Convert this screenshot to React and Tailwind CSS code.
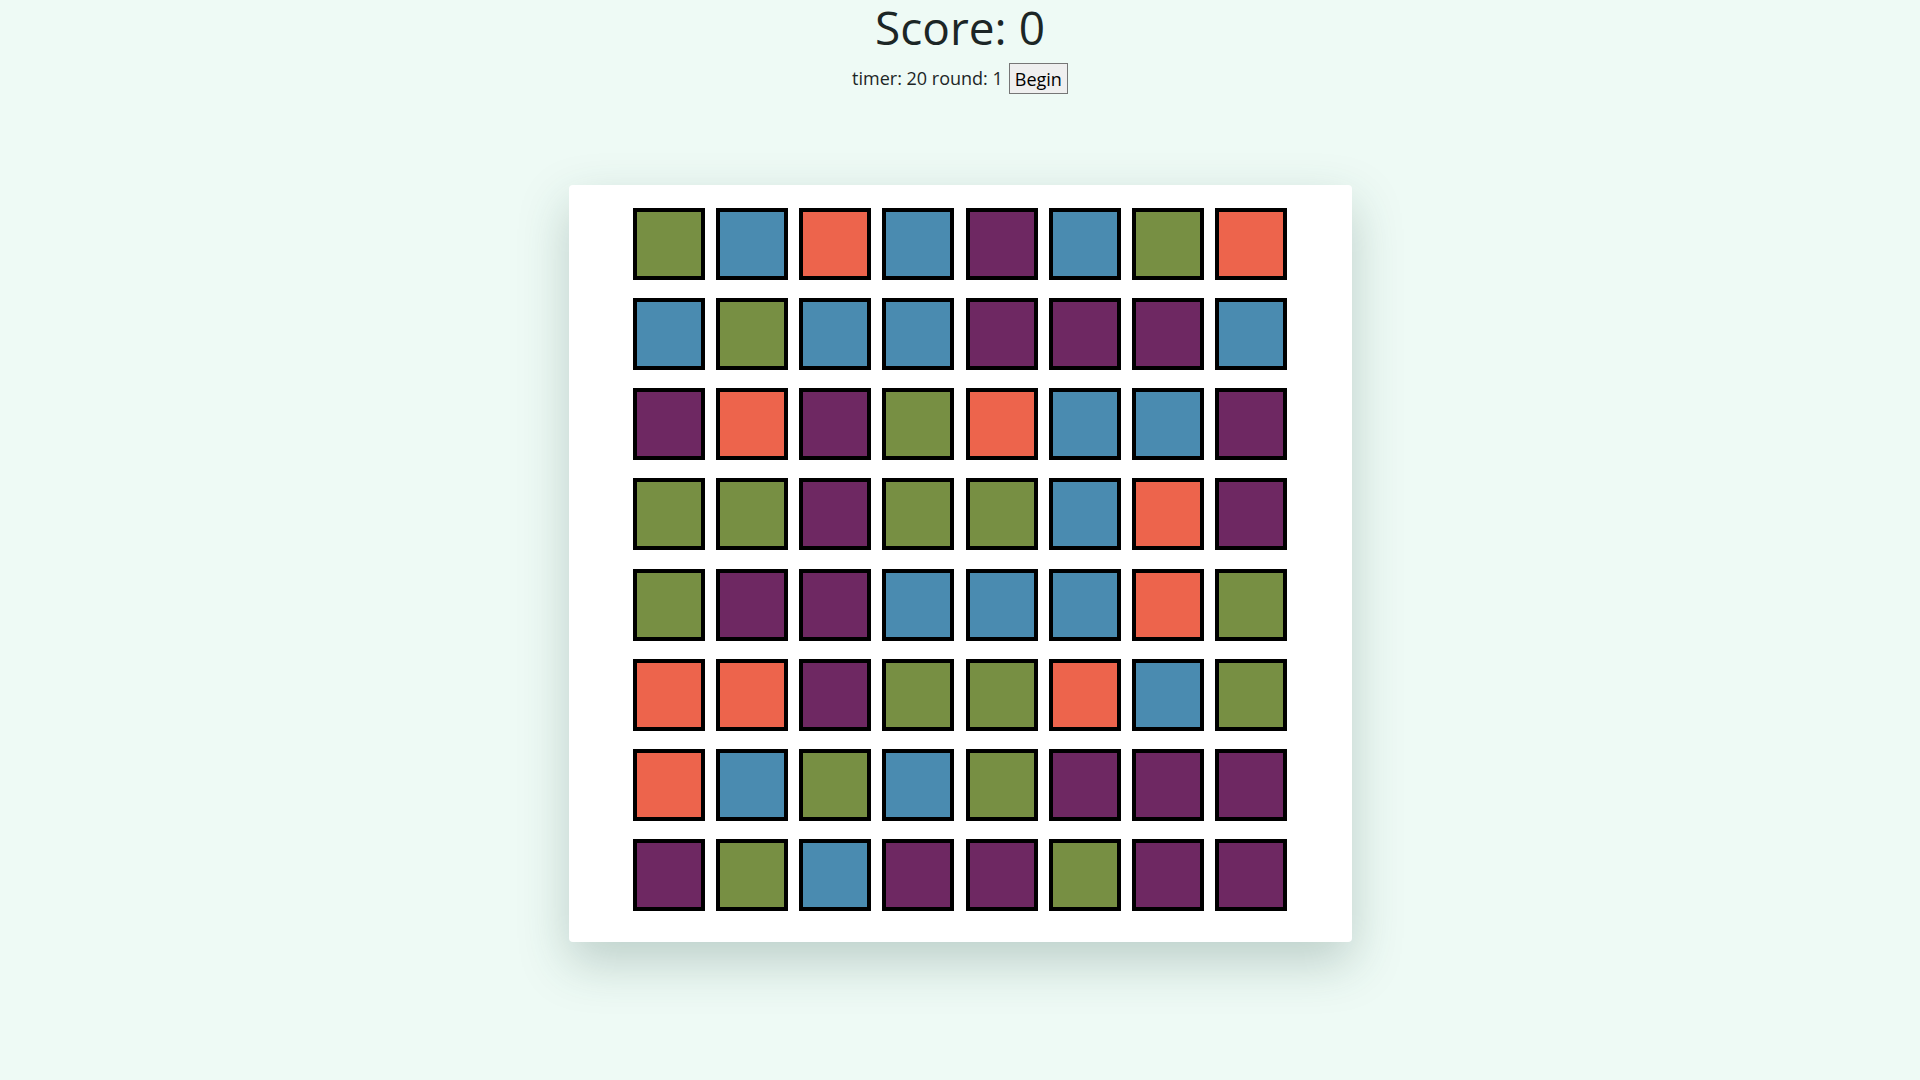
import React from 'react'

const COLORS = {
    G: 'bg-[#778f43]',
    B: 'bg-[#4a8bb0]',
    O: 'bg-[#ed644c]',
    P: 'bg-[#6e2862]',
}

const BOARD = [
    'GBOBPBGO',
    'BGBBPPPB',
    'POPGOBBP',
    'GGPGGBOP',
    'GPPBBBOG',
    'OOPGGOBG',
    'OBGBGPPP',
    'PGBPPGPP',
]

export default function App() {
    return (
        <div className="min-h-screen w-full bg-[#eefaf5] text-[#1c2626] font-['Open_Sans','Noto_Sans',sans-serif]">
            {/* header */}
            <div className="flex flex-col items-center">
                <h1 className="text-[46px] leading-[54px]">Score: 0</h1>
                <div className="flex items-center gap-[6px] mt-[9px] text-[18px]">
                    <span>timer: 20 round: 1</span>
                    <button className="h-[31px] px-[5px] bg-[#efefef] border border-[#767676] text-black text-[18px] leading-none">
                        Begin
                    </button>
                </div>
            </div>

            {/* board */}
            <div className="flex justify-center mt-[91px]">
                <div className="w-[783px] bg-white rounded-[4px] shadow-[0_20px_50px_rgba(40,80,70,0.25)] pt-[23px] pb-[31px] px-[64px]">
                    <div className="flex flex-col justify-between h-[703px]">
                        {BOARD.map((row, r) => (
                            <div key={r} className="flex justify-between w-[655px]">
                                {row.split('').map((c, i) => (
                                    <div
                                        key={i}
                                        className={`w-[72px] h-[72px] border-4 border-black ${COLORS[c]}`}
                                    />
                                ))}
                            </div>
                        ))}
                    </div>
                </div>
            </div>
        </div>
    )
}
